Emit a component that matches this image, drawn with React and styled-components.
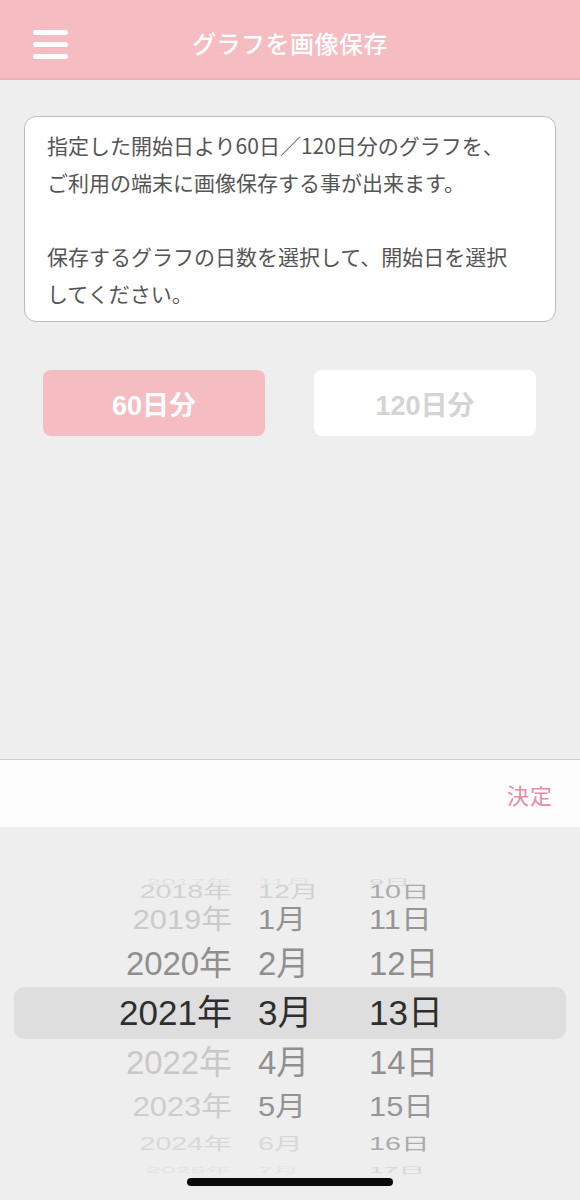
import React from "react";
import styled, { createGlobalStyle } from "styled-components";

const Global = createGlobalStyle`
  html, body { margin: 0; padding: 0; background: #eeeeee; }
  body { font-family: "Noto Sans CJK JP", "Noto Sans", sans-serif; }
  * { box-sizing: border-box; }
`;

const Page = styled.div`
  width: 580px;
  height: 1200px;
  display: flex;
  flex-direction: column;
  background: #eeeeee;
  overflow: hidden;
`;

const Header = styled.header`
  height: 80px;
  flex: none;
  background: #f5bcc2;
  border-bottom: 2px solid #eab3b9;
  display: grid;
  grid-template-columns: 80px 1fr 80px;
  align-items: center;
  padding-top: 10px;
`;

const MenuButton = styled.div`
  display: flex;
  flex-direction: column;
  gap: 7px;
  padding-left: 33px;
`;

const MenuBar = styled.span`
  display: block;
  width: 35px;
  height: 5px;
  border-radius: 3px;
  background: #ffffff;
`;

const Title = styled.h1`
  margin: 0;
  text-align: center;
  color: #ffffff;
  font-size: 24px;
  font-weight: 500;
  letter-spacing: 0.5px;
  margin-top: -3px;
`;

const Content = styled.main`
  flex: 1;
  display: flex;
  flex-direction: column;
  padding: 36px 24px 0;
`;

const InfoBox = styled.div`
  background: #ffffff;
  border: 1.5px solid #bcbcbc;
  border-radius: 12px;
  padding: 10px 20px 9px 22px;
  color: #555555;
  font-size: 21px;
  line-height: 37px;
`;

const Para = styled.p`
  margin: 0;
  & + & { margin-top: 37px; }
`;

const ButtonRow = styled.div`
  display: flex;
  justify-content: space-between;
  padding: 0 20px 0 19px;
  margin-top: 48px;
`;

const RangeButton = styled.button`
  width: 222px;
  height: 66px;
  border: none;
  border-radius: 8px;
  font-family: "Liberation Sans", "Noto Sans CJK JP", sans-serif;
  font-size: 27px;
  font-weight: 700;
  background: ${(p) => (p.$active ? "#f5bcc2" : "#ffffff")};
  color: ${(p) => (p.$active ? "#ffffff" : "#d4d4d4")};
  display: flex;
  align-items: center;
  justify-content: center;
  padding: 0;
`;

const Toolbar = styled.div`
  height: 68px;
  flex: none;
  background: #fdfdfd;
  border-top: 1px solid #cccccc;
  display: flex;
  align-items: center;
  justify-content: flex-end;
  padding-right: 27px;
`;

const DoneButton = styled.span`
  color: #e68ca2;
  font-size: 22px;
  letter-spacing: 1px;
`;

const PickerArea = styled.div`
  height: 373px;
  flex: none;
  background: #eeeeee;
  display: flex;
  flex-direction: column;
  padding-top: 38px;
`;

const Wheel = styled.div`
  display: flex;
  flex-direction: column;
  height: 296px;
`;

const WheelRow = styled.div`
  margin: 0 14px;
  display: grid;
  grid-template-columns: 218px 85px 1fr;
  column-gap: 26px;
  align-items: center;
  border-radius: 10px;
  background: ${(p) => (p.$selected ? "#dedede" : "transparent")};
  font-family: "Liberation Sans", "Noto Sans CJK JP", sans-serif;
  font-size: 35px;
  line-height: 1;
  white-space: nowrap;
`;

const Cell = styled.span`
  display: block;
  text-align: ${(p) => (p.$align === "right" ? "right" : "left")};
  transform-origin: ${(p) => (p.$align === "right" ? "right" : "left")} center;
`;

const HomeIndicator = styled.div`
  width: 206px;
  height: 8px;
  border-radius: 4px;
  background: #0a0a0a;
  margin: 17px auto 0;
`;

const R = 148;
const STEP = (20 * Math.PI) / 180;
const HALF = (10 * Math.PI) / 180;

const years = [2017, 2018, 2019, 2020, 2021, 2022, 2023, 2024, 2025];
const months = [11, 12, 1, 2, 3, 4, 5, 6, 7];
const days = [9, 10, 11, 12, 13, 14, 15, 16, 17];

const yearColors = ["#e2e2e2", "#d2d2d2", "#cacaca", "#8f8f8f", "#2e2e2e", "#c8c8c8", "#cdcdcd", "#d8d8d8", "#e4e4e4"];
const monthColors = ["#e2e2e2", "#d2d2d2", "#939393", "#8f8f8f", "#2e2e2e", "#8f8f8f", "#939393", "#d8d8d8", "#e4e4e4"];
const dayColors = ["#d8d8d8", "#ababab", "#969696", "#8f8f8f", "#2e2e2e", "#8f8f8f", "#969696", "#ababab", "#d8d8d8"];

export default function App() {
  return (
    <>
      <Global />
      <Page>
        <Header>
          <MenuButton>
            <MenuBar />
            <MenuBar />
            <MenuBar />
          </MenuButton>
          <Title>グラフを画像保存</Title>
          <div />
        </Header>
        <Content>
          <InfoBox>
            <Para>
              指定した開始日より60日／120日分のグラフを、
              <br />
              ご利用の端末に画像保存する事が出来ます。
            </Para>
            <Para>
              保存するグラフの日数を選択して、開始日を選択
              <br />
              してください。
            </Para>
          </InfoBox>
          <ButtonRow>
            <RangeButton $active>60日分</RangeButton>
            <RangeButton>120日分</RangeButton>
          </ButtonRow>
        </Content>
        <Toolbar>
          <DoneButton>決定</DoneButton>
        </Toolbar>
        <PickerArea>
          <Wheel>
            {years.map((y, i) => {
              const k = i - 4;
              const cos = Math.cos(k * STEP);
              const h = 2 * R * Math.sin(HALF) * cos;
              const sx = 1 - 0.06 * Math.abs(k);
              const sy = Math.max(cos, 0.24);
              const tf = `scale(${sx.toFixed(3)}, ${sy.toFixed(3)})`;
              return (
                <WheelRow key={y} $selected={k === 0} style={{ height: `${h.toFixed(2)}px` }}>
                  <Cell $align="right" style={{ transform: tf, color: yearColors[i] }}>
                    {y}年
                  </Cell>
                  <Cell style={{ transform: tf, color: monthColors[i] }}>{months[i]}月</Cell>
                  <Cell style={{ transform: tf, color: dayColors[i] }}>{days[i]}日</Cell>
                </WheelRow>
              );
            })}
          </Wheel>
          <HomeIndicator />
        </PickerArea>
      </Page>
    </>
  );
}
